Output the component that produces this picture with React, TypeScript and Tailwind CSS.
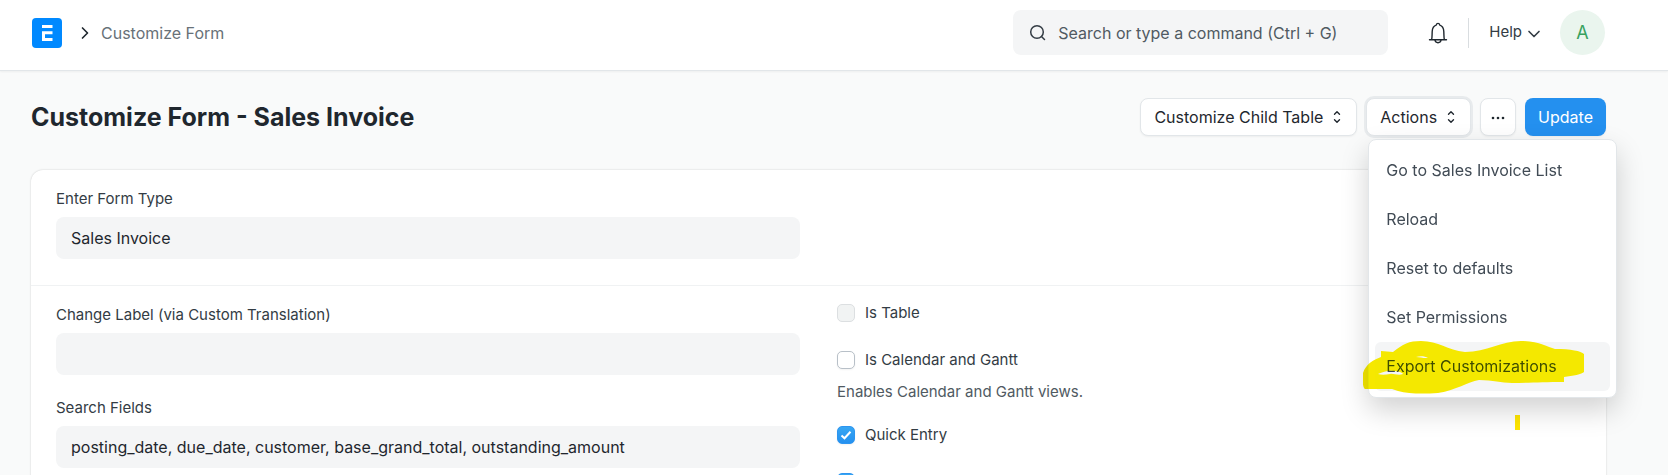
import React from "react";
import { ChevronDown, ChevronRight } from "lucide-react";

const menuItems = [
  "Go to Sales Invoice List",
  "Reload",
  "Reset to defaults",
  "Set Permissions",
  "Export Customizations",
];

const btn =
  "flex h-[38px] items-center rounded-lg border border-[#e2e6e9] bg-white text-base text-[#1f272e] shadow-xs";

const SelectIcon = () => (
  <svg
    width="16"
    height="16"
    viewBox="0 0 16 16"
    fill="none"
    stroke="currentColor"
    strokeWidth="1.400"
    strokeLinecap="round"
    strokeLinejoin="round"
    className="mt-px"
  >
    <path d="M5.500 5.300L8 2.800L10.500 5.300M5.500 10.700L8 13.200L10.500 10.700" />
  </svg>
);

const BellIcon = () => (
  <svg width="20" height="22" viewBox="0 0 20 22" fill="none" stroke="#1f272e" strokeWidth="1.400">
    <path
      d="M1.500 17.700H18.500M3.600 17.500C4.200 16 4 13.500 4.200 9.500C4.400 6 5.800 3.800 8.200 3.100C8.500 1.800 9.200 1.400 10 1.400C10.800 1.400 11.500 1.800 11.800 3.100C14.200 3.800 15.600 6 15.800 9.500C16 13.500 15.800 16 16.400 17.500"
      strokeLinecap="round"
      strokeLinejoin="round"
    />
    <path d="M7 18C7.200 19.800 8.400 20.700 10 20.700C11.600 20.700 12.800 19.800 13 18" />
  </svg>
);

const Field = ({ id, label, value }: { id: string; label: string; value: string }) => (
  <div>
    <label htmlFor={id} className="mb-2 block text-[15px] leading-5 text-[#333c44]">
      {label}
    </label>
    <input
      id={id}
      type="text"
      defaultValue={value}
      className="h-[42px] w-full rounded-lg bg-[#f4f5f6] px-[15px] text-base text-[#1f272e] outline-none"
    />
  </div>
);

const Check = ({
  id,
  label,
  checked,
  disabled,
}: {
  id: string;
  label?: string;
  checked?: boolean;
  disabled?: boolean;
}) => (
  <div className="flex h-5 items-center gap-[10px]">
    <span className="relative flex size-[18px] shrink-0">
      <input
        id={id}
        type="checkbox"
        aria-label={label ? undefined : id}
        defaultChecked={checked}
        disabled={disabled}
        className="peer size-[18px] appearance-none rounded-[5px] border border-[#b8c0c8] bg-white shadow-xs checked:border-[#2d95f0] checked:bg-linear-to-b checked:from-[#37a6f3] checked:to-[#2490ef] disabled:border-[#dcdfe1] disabled:bg-[#f1f3f3] disabled:shadow-none"
      />
      <svg
        viewBox="0 0 18 18"
        fill="none"
        className="pointer-events-none absolute inset-0 hidden size-[18px] stroke-white stroke-2 peer-checked:block"
      >
        <path d="M4.500 9.500L7.500 12.300L13.500 5.800" />
      </svg>
    </span>
    {label && (
      <label htmlFor={id} className="text-[15px] leading-5 text-[#333c44]">
        {label}
      </label>
    )}
  </div>
);

// highlighter strokes over the export entry
const Marker = () => (
  <svg
    width="222"
    height="92"
    viewBox="0 0 222 92"
    className="pointer-events-none absolute -bottom-[36px] -left-[6px] mix-blend-darken"
  >
    <path
      fillRule="evenodd"
      d="M18 10L30 11C40 3 46 0 58 0C76 0 84 9 102 11C124 11 138 0 158 0C176 0 184 6 192 8C208 8 218 10 221 13V31C219 33 210 35 201 36V41C180 41 166 42 149 42C138 42 130 39 116 39C104 41 94 49 75 52C60 53 46 53 35 50L29 48H2C0 47 -1 40 0 32C3 23 10 19 18 16ZM53 16C57 14.500 62 15 65 17C61 17.500 57 16 53 16ZM15 33C20 31 26 29 30 30C34 30 39 31 40 33C35 35 30 32 27 33C22 34 18 34 15 33Z"
      fill="#f6e800"
    />
    <path d="M152 74h5v15h-5z" fill="#ffe600" />
  </svg>
);

export default function App() {
  return (
    <div className="min-h-screen bg-[#f9fafa] font-['Inter',sans-serif]">
      <header className="flex h-[71px] items-center border-b border-[#e2e6e9] bg-white pr-[63px] pb-[5px] pl-8 shadow-xs">
        <a href="#" aria-label="Home">
          <svg width="30" height="30" viewBox="0 0 30 30">
            <rect width="30" height="30" rx="4" fill="#0089ff" />
            <path d="M10 7h10.500v3H10zM10 13.300h10.500v3h-7.500V20h7.500v3H10z" fill="#fff" />
          </svg>
        </a>
        <ChevronRight className="mr-[6px] ml-[13px] size-5 text-[#1f272e]" strokeWidth={2} />
        <a href="#" className="text-base text-[#687178]">
          Customize Form
        </a>
        <div className="ml-auto flex h-[45px] w-[375px] items-center gap-3 rounded-lg bg-[#f4f5f6] px-4">
          <svg
            width="17"
            height="17"
            viewBox="0 0 17 17"
            fill="none"
            stroke="#333c44"
            strokeWidth="1.500"
            strokeLinecap="round"
            className="shrink-0"
          >
            <circle cx="8" cy="8" r="6.300" />
            <path d="M12.500 12.500L15.500 15.500" />
          </svg>
          <input
            type="text"
            aria-label="Search"
            placeholder="Search or type a command (Ctrl + G)"
            className="w-full bg-transparent text-base outline-none placeholder:text-[#505a62]"
          />
        </div>
        <button aria-label="Notifications" className="mr-5 ml-10">
          <BellIcon />
        </button>
        <div className="h-[30px] w-px bg-[#d9dde0]" />
        <button className="ml-5 flex items-center gap-[2px] text-[15px] text-[#333c44]">
          Help
          <ChevronDown className="mt-[2px] size-5" strokeWidth={2} />
        </button>
        <button className="ml-4 size-[45px] rounded-full bg-[#eaf5ee] text-lg text-[#38a160]">A</button>
      </header>

      <main className="pr-[62px] pl-[31px]">
        <div className="flex h-[99px] items-center justify-between pb-2">
          <h1 className="pt-[2px] text-[25px] font-bold text-[#1f272e]">
            Customize Form - Sales Invoice
          </h1>
          <div className="flex gap-[9px]">
            <button className={`${btn} gap-[6px] pr-[11px] pl-[13px]`}>
              Customize Child Table
              <SelectIcon />
            </button>
            <div className="relative">
              <button className={`${btn} gap-[6px] pr-[11px] pl-[13px] ring-2 ring-[#e8ebed]`}>
                Actions
                <SelectIcon />
              </button>
              <div className="absolute top-[41px] left-[2px] z-10 w-[249px] rounded-lg border border-[#e2e6e9] bg-white p-[6px] shadow-[0_12px_28px_rgba(0,0,0,0.18)]">
                {menuItems.map((item, i) => (
                  <button
                    key={item}
                    className={`flex h-[49px] w-full items-center rounded-md px-[11px] text-base text-[#414b55] ${
                      i === 4 ? "bg-[#f4f5f6]" : ""
                    }`}
                  >
                    {item}
                  </button>
                ))}
                <Marker />
              </div>
            </div>
            <button aria-label="More" className={`${btn} w-9 justify-center`}>
              <svg width="16" height="16" viewBox="0 0 16 16" fill="currentColor">
                <circle cx="3" cy="9" r="1.300" />
                <circle cx="8" cy="9" r="1.300" />
                <circle cx="13" cy="9" r="1.300" />
              </svg>
            </button>
            <button className="h-[38px] rounded-lg bg-[#2490ef] px-[13px] text-base text-white shadow-xs">
              Update
            </button>
          </div>
        </div>

        <form className="rounded-xl bg-white shadow-[0_0_2px_rgba(0,0,0,0.2)]">
          <section className="grid grid-cols-2 gap-x-[37px] border-b border-[#f0f2f3] px-[25px] pt-[19px] pb-[26px]">
            <Field id="doc_type" label="Enter Form Type" value="Sales Invoice" />
          </section>
          <section className="grid grid-cols-2 gap-x-[37px] px-[25px] pt-[17px] pb-[26px]">
            <div className="flex flex-col gap-[23px] pt-[2px]">
              <Field id="label" label="Change Label (via Custom Translation)" value="" />
              <Field
                id="search_fields"
                label="Search Fields"
                value="posting_date, due_date, customer, base_grand_total, outstanding_amount"
              />
            </div>
            <div>
              <Check id="istable" label="Is Table" disabled />
              <div className="mt-[27px]">
                <Check id="is_calendar" label="Is Calendar and Gantt" />
                <p className="mt-3 text-[15px] leading-5 text-[#505a62]">
                  Enables Calendar and Gantt views.
                </p>
              </div>
              <div className="mt-[23px]">
                <Check id="quick_entry" label="Quick Entry" checked />
              </div>
              <div className="mt-[27px]">
                <Check id="track_changes" checked />
              </div>
            </div>
          </section>
        </form>
      </main>
    </div>
  );
}
